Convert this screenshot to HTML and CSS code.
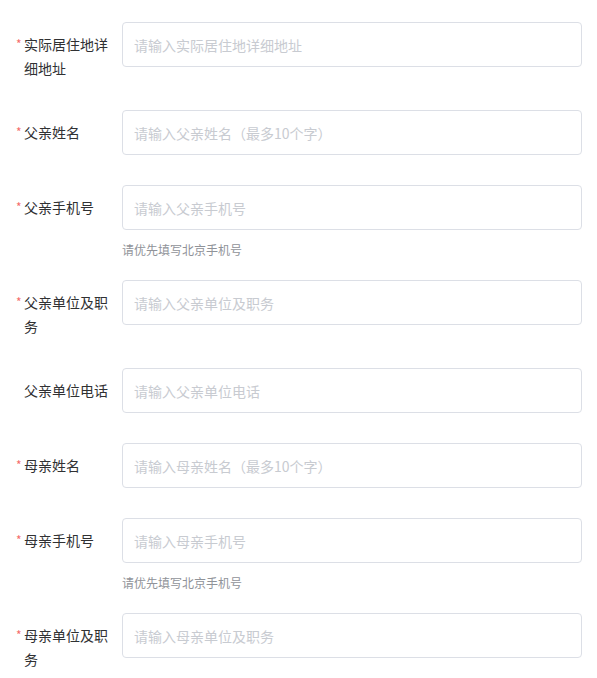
FILE: index.html
```html
<!DOCTYPE html>
<html lang="zh-CN">
  <head>
    <meta charset="UTF-8" />
    <meta name="viewport" content="width=device-width, initial-scale=1.0" />
    <title>家庭信息</title>
    <link rel="stylesheet" href="styles.css">
  </head>
  <body>
    <form class="form">
      <div class="form-item">
        <label class="form-label required">实际居住地详细地址</label>
        <div class="form-content">
          <input class="form-input" type="text" placeholder="请输入实际居住地详细地址" />
        </div>
      </div>
      <div class="form-item">
        <label class="form-label required">父亲姓名</label>
        <div class="form-content">
          <input class="form-input" type="text" placeholder="请输入父亲姓名（最多10个字）" />
        </div>
      </div>
      <div class="form-item has-tip">
        <label class="form-label required">父亲手机号</label>
        <div class="form-content">
          <input class="form-input" type="text" placeholder="请输入父亲手机号" />
          <div class="form-tip">请优先填写北京手机号</div>
        </div>
      </div>
      <div class="form-item">
        <label class="form-label required">父亲单位及职务</label>
        <div class="form-content">
          <input class="form-input" type="text" placeholder="请输入父亲单位及职务" />
        </div>
      </div>
      <div class="form-item">
        <label class="form-label">父亲单位电话</label>
        <div class="form-content">
          <input class="form-input" type="text" placeholder="请输入父亲单位电话" />
        </div>
      </div>
      <div class="form-item">
        <label class="form-label required">母亲姓名</label>
        <div class="form-content">
          <input class="form-input" type="text" placeholder="请输入母亲姓名（最多10个字）" />
        </div>
      </div>
      <div class="form-item has-tip">
        <label class="form-label required">母亲手机号</label>
        <div class="form-content">
          <input class="form-input" type="text" placeholder="请输入母亲手机号" />
          <div class="form-tip">请优先填写北京手机号</div>
        </div>
      </div>
      <div class="form-item">
        <label class="form-label required">母亲单位及职务</label>
        <div class="form-content">
          <input class="form-input" type="text" placeholder="请输入母亲单位及职务" />
        </div>
      </div>
    </form>
  </body>
</html>
```

FILE: styles.css
```css
body {
  margin: 0;
  background: #fff;
  font-family: "Noto Sans CJK SC", "Liberation Sans", sans-serif;
  color: #303133;
}

.form {
  padding: 22px 15px 0 0;
}

.form-item {
  display: flex;
  align-items: flex-start;
  margin-bottom: 30px;
}
.form-item.has-tip {
  margin-bottom: 20px;
}

.form-label {
  position: relative;
  flex: 0 0 auto;
  width: 86px;
  padding: 10px 12px 0 24px;
  font-size: 14px;
  line-height: 24px;
  color: #303133;
}
.required::before {
  content: "*";
  position: absolute;
  left: 16px;
  top: 10px;
  font-size: 12px;
  line-height: 24px;
  color: #f56c6c;
}

.form-content {
  flex: 1;
}

.form-input {
  display: block;
  box-sizing: border-box;
  width: 100%;
  height: 45px;
  padding: 0 11px;
  border: 1px solid #dcdfe6;
  border-radius: 4px;
  font-family: inherit;
  font-size: 14px;
  color: #606266;
  outline: none;
  background: #fff;
}
.form-input::placeholder {
  color: #c8cbd1;
}

.form-tip {
  padding-top: 10px;
  font-size: 12px;
  line-height: 20px;
  color: #909399;
}
```
